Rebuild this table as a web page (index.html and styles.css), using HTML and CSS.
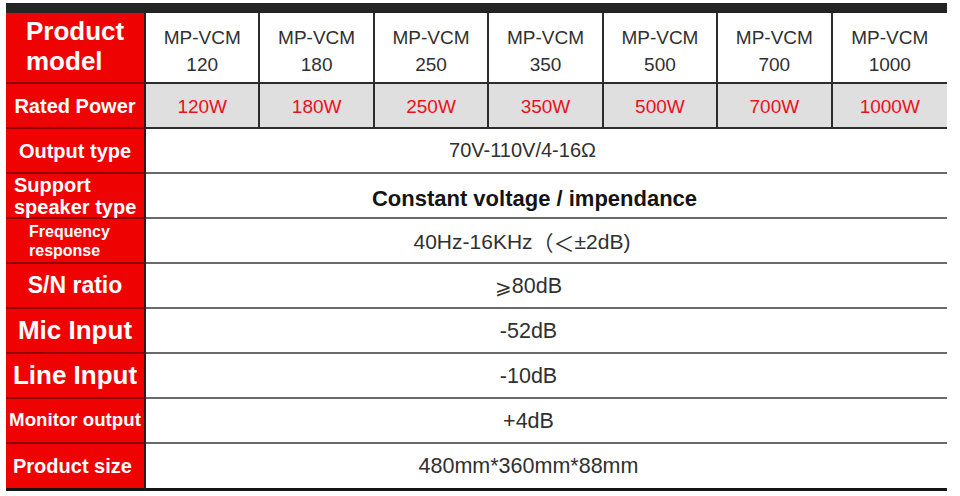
FILE: index.html
```html
<!DOCTYPE html>
<html lang="en">
<head>
<meta charset="utf-8">
<title>MP-VCM specifications</title>
<link rel="stylesheet" href="styles.css">
</head>
<body>
<div class="sheet">
  <div class="topbar"></div>
  <div class="spec">
    <div class="label label-model">Product<br>model</div>
    <div class="cell model">MP-VCM<br>120</div>
    <div class="cell model">MP-VCM<br>180</div>
    <div class="cell model">MP-VCM<br>250</div>
    <div class="cell model">MP-VCM<br>350</div>
    <div class="cell model">MP-VCM<br>500</div>
    <div class="cell model">MP-VCM<br>700</div>
    <div class="cell model last">MP-VCM<br>1000</div>

    <div class="label label-power">Rated Power</div>
    <div class="cell power">120W</div>
    <div class="cell power">180W</div>
    <div class="cell power">250W</div>
    <div class="cell power">350W</div>
    <div class="cell power">500W</div>
    <div class="cell power">700W</div>
    <div class="cell power last">1000W</div>

    <div class="label label-output">Output type</div>
    <div class="cell wide size-output">70V-110V/4-16Ω</div>

    <div class="label label-support">Support<br>speaker type</div>
    <div class="cell wide strong">Constant voltage / impendance</div>

    <div class="label label-freq">Frequency<br>response</div>
    <div class="cell wide size-freq">40Hz-16KHz<span class="cjk">（＜</span>±2dB)</div>

    <div class="label label-sn">S/N ratio</div>
    <div class="cell wide size-std"><span class="math">⩾</span>80dB</div>

    <div class="label label-input">Mic Input</div>
    <div class="cell wide size-std">-52dB</div>

    <div class="label label-input">Line Input</div>
    <div class="cell wide size-std">-10dB</div>

    <div class="label label-monitor">Monitor output</div>
    <div class="cell wide size-std">+4dB</div>

    <div class="label label-size end">Product size</div>
    <div class="cell wide size-std end">480mm*360mm*88mm</div>
  </div>
</div>
</body>
</html>
```

FILE: styles.css
```css
html, body {
  margin: 0;
  padding: 0;
  background: #ffffff;
}

body {
  font-family: "Liberation Sans", Arial, sans-serif;
}

.sheet {
  padding: 3px 0 0 6px;
  width: 941px;
}

.topbar {
  height: 10px;
  background: #242424;
}

.spec {
  display: grid;
  grid-template-columns: 140px repeat(7, 1fr);
  grid-template-rows: 71px repeat(8, 45px) 47px;
  width: 941px;
}

.label {
  box-sizing: border-box;
  background: #ee0202;
  color: #ffffff;
  font-weight: bold;
  border-right: 2px solid #1f1f1f;
  border-bottom: 2px solid #8e0000;
  display: flex;
  align-items: center;
  justify-content: center;
  text-align: center;
  line-height: 1.1;
  white-space: nowrap;
}

.label-model {
  font-size: 26px;
  line-height: 30px;
  justify-content: flex-start;
  text-align: left;
  padding: 0 0 4px 20px;
}

.label-power,
.label-output {
  font-size: 20px;
}

.label-support {
  font-size: 20px;
  line-height: 22px;
  justify-content: flex-start;
  text-align: left;
  padding: 0 0 0 8px;
}

.label-freq {
  font-size: 16px;
  line-height: 19px;
  justify-content: flex-start;
  text-align: left;
  padding: 0 0 0 23px;
}

.label-sn {
  font-size: 23px;
}

.label-input {
  font-size: 26px;
}

.label-monitor {
  font-size: 18.7px;
}

.label-size {
  font-size: 20px;
  justify-content: flex-start;
  padding-left: 7px;
}

.cell {
  box-sizing: border-box;
  display: flex;
  align-items: center;
  justify-content: center;
  text-align: center;
  color: #303030;
  border-bottom: 2px solid #6a6a6a;
  white-space: nowrap;
}

.model {
  font-size: 19px;
  line-height: 27px;
  padding-top: 6px;
  border-right: 2px solid #2c2c2c;
  border-bottom: 2px solid #2c2c2c;
}

.power {
  font-size: 19px;
  background: #dfdfdf;
  color: #e8121c;
  padding-top: 2px;
  border-right: 2px solid #2c2c2c;
  border-bottom: 2px solid #2c2c2c;
}

.model.last,
.power.last {
  border-right: none;
}

.wide {
  grid-column: span 7;
}

.size-output {
  font-size: 20px;
  padding-right: 48px;
}

.size-freq {
  font-size: 21px;
  padding: 3px 49px 0 0;
}

.size-std {
  font-size: 21.5px;
  padding: 2px 36px 0 0;
}

.strong {
  font-size: 22px;
  font-weight: bold;
  color: #141414;
  padding: 6px 24px 0 0;
}

.cjk {
  font-family: "Noto Sans CJK SC", sans-serif;
}

.math {
  font-family: "DejaVu Sans", sans-serif;
  font-size: 20px;
}

.end {
  border-bottom: 3px solid #161616;
}

.size-std.end {
  padding-top: 0;
}
```
